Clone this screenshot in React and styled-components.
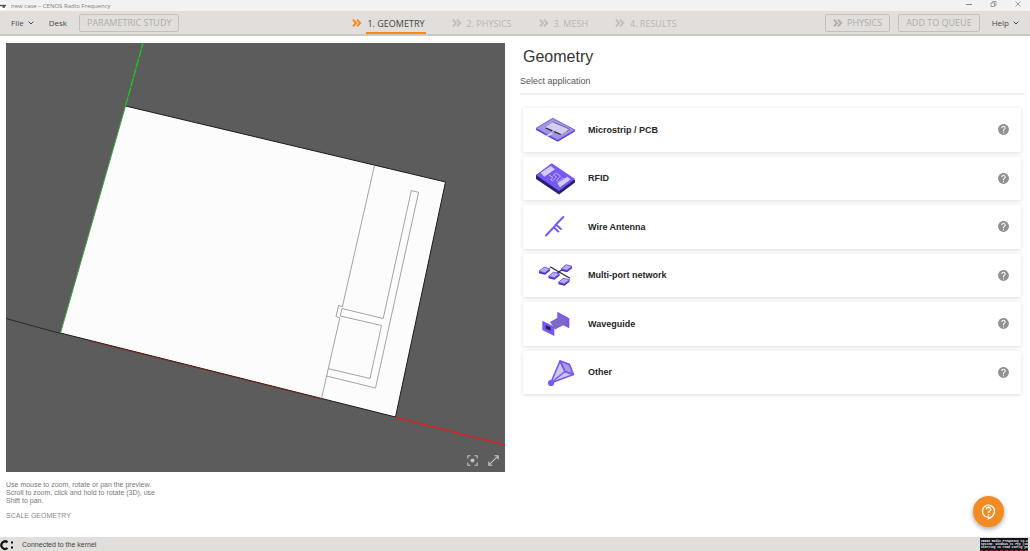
import React from "react";
import styled, { createGlobalStyle } from "styled-components";

const Global = createGlobalStyle`
  * { box-sizing: border-box; }
  body { margin: 0; background: #fff; font-family: "Liberation Sans", Arial, sans-serif; color: #333; }
  button { font: inherit; color: inherit; background: none; border: 0; padding: 0; margin: 0; cursor: pointer; }
  svg { display: block; flex: none; }
  h1, p { margin: 0; font-weight: 400; }
`;

const ui = `"Open Sans", "Noto Sans", sans-serif`;

const Page = styled.div`
  display: flex;
  flex-direction: column;
  min-height: 100vh;
`;

const TitleBar = styled.header`
  display: flex;
  align-items: center;
  gap: 5px;
  height: 11px;
  padding: 0 9px 0 0;
  background: #f2f2f2;
  font-family: ${ui};
  font-size: 6px;
  line-height: 10px;
  color: #808080;
`;

const WindowButtons = styled.div`
  display: flex;
  align-items: center;
  gap: 18px;
  height: 8px;
  margin-left: auto;
  align-self: flex-start;
  color: #8a8a8a;
`;

const Toolbar = styled.nav`
  display: grid;
  grid-template-columns: 1fr auto 1fr;
  align-items: center;
  height: 25px;
  padding: 0 11px;
  background: #e1dedb;
  border-bottom: 2px solid #cbc8c6;
  font-family: ${ui};
`;

const Group = styled.div`
  display: flex;
  align-items: center;
  justify-content: ${(p) => (p.$end ? "flex-end" : "flex-start")};
  gap: ${(p) => p.$gap}px;
`;

const MenuButton = styled.button`
  display: flex;
  align-items: center;
  gap: 4px;
  font-size: 8px;
  line-height: 16px;
  color: #4a4a4a;
`;

const OutlineButton = styled.button`
  display: flex;
  align-items: center;
  gap: 4px;
  height: 18px;
  padding: 0 7px;
  border: 1px solid #c3c1bf;
  border-radius: 2px;
  font-size: 9px;
  line-height: 16px;
  color: #b0aeac;
`;

const Steps = styled.div`
  display: flex;
  gap: 26px;
  align-self: end;
`;

const Step = styled.button`
  display: flex;
  align-items: center;
  gap: 4px;
  height: 23px;
  padding-top: 1px;
  font-size: 9px;
  color: ${(p) => (p.$active ? "#444" : "#b9b7b5")};
  svg { color: ${(p) => (p.$active ? "#f28a1c" : "#c0bebc")}; }
`;

const StepLabel = styled.span`
  height: 22px;
  line-height: 24px;
  padding: 0 1px;
  border-bottom: 2px solid ${(p) => (p.$active ? "#f28a1c" : "transparent")};
`;

const Main = styled.main`
  flex: 1;
  display: grid;
  grid-template-columns: minmax(0, 499fr) minmax(0, 505fr);
  align-items: start;
  gap: 15px;
  padding: 7px 5px 0 6px;
`;

const Viewport = styled.div`
  position: relative;
  background: #5c5c5c;
`;

const ViewTools = styled.div`
  position: absolute;
  right: 6px;
  bottom: 6px;
  display: flex;
  gap: 10px;
  color: #c4c4c4;
`;

const Hint = styled.p`
  width: 156px;
  margin-top: 9px;
  font-size: 7px;
  line-height: 8px;
  color: #777;
`;

const ScaleButton = styled.button`
  display: block;
  margin-top: 7px;
  font-size: 7px;
  line-height: 8px;
  color: #8a8a8a;
`;

const Heading = styled.h1`
  padding: 4px 3px 0;
  font-size: 16px;
  line-height: 20px;
  color: #333;
`;

const Subheading = styled.p`
  padding: 8px 0 6px;
  border-bottom: 2px solid #f0f0f0;
  font-size: 9px;
  line-height: 12px;
  color: #555;
`;

const Cards = styled.div`
  display: grid;
  grid-auto-rows: 1fr;
  gap: 5px;
  height: 286px;
  margin: 13px 4px 0 3px;
`;

const Card = styled.div`
  display: flex;
  align-items: center;
  padding-right: 11px;
  background: #fff;
  box-shadow: 0 1px 4px rgba(0, 0, 0, 0.14);
`;

const CardButton = styled.button`
  flex: 1;
  display: flex;
  align-items: center;
  gap: 11px;
  height: 100%;
  padding-left: 10px;
  font-size: 9px;
  font-weight: 700;
  color: #262626;
`;

const StatusBar = styled.footer`
  display: flex;
  align-items: center;
  gap: 8px;
  height: 14px;
  padding-right: 2px;
  background: #e1dedb;
  font-size: 7px;
  line-height: 14px;
  color: #444;
`;

const StatusText = styled.span`
  padding-top: 2px;
`;

const Console = styled.div`
  width: 48px;
  height: 13px;
  margin-left: auto;
  align-self: flex-end;
  padding: 2px 0 0 1px;
  background: #14141f;
  border-bottom: 1px dashed #b01c2c;
  color: #f4f4f4;
  font: 700 3px/3px "Liberation Mono", monospace;
  white-space: nowrap;
`;

const HelpFab = styled.button`
  position: fixed;
  right: 26px;
  bottom: 24px;
  display: grid;
  place-items: center;
  width: 31px;
  height: 31px;
  border-radius: 50%;
  background: #f28c22;
  color: #fff;
  box-shadow: 0 2px 5px rgba(0, 0, 0, 0.35);
`;

const Chevrons = () => (
  <svg width="10" height="8" viewBox="0 0 10 8" fill="none" stroke="currentColor" strokeWidth="1.9">
    <path d="M1 .6 4.1 4 1 7.4M5 .6 8.2 4 5 7.4" />
  </svg>
);

const Caret = () => (
  <svg width="6" height="4" viewBox="0 0 6 4" fill="none" stroke="currentColor">
    <path d="m.7.7 2.3 2.3L5.3.7" />
  </svg>
);

const Question = () => (
  <svg width="13" height="13" viewBox="0 0 24 24" fill="#929292">
    <path d="M12 2C6.48 2 2 6.48 2 12s4.48 10 10 10 10-4.48 10-10S17.52 2 12 2zm1 17h-2v-2h2v2zm2.07-7.75-.9.92C13.45 12.9 13 13.5 13 15h-2v-.5c0-1.1.45-2.1 1.17-2.83l1.24-1.26c.37-.36.59-.86.59-1.41 0-1.1-.9-2-2-2s-2 .9-2 2H8c0-2.21 1.79-4 4-4s4 1.79 4 4c0 .88-.36 1.68-.93 2.25z" />
  </svg>
);

const Scene = () => (
  <svg width="100%" viewBox="6 43 499 429" fill="none" role="img" aria-label="Geometry preview">
    <path d="M125.500 106 445.500 182 395.500 417 60.500 333z" fill="#fcfcfc" />
    <path d="M125.500 106 445.500 182 395.500 417 60.500 333" stroke="#1c1c1c" />
    <path d="M6 318.500 60.500 333.500" stroke="#202b36" />
    <path d="M60.500 333 125.500 106" stroke="#3aa63a" />
    <path d="M125.500 106 143 43" stroke="#22c022" strokeWidth="1.500" strokeDasharray="9 1" />
    <path d="M90 341 322 399" stroke="#8e2020" strokeWidth=".8" />
    <path d="M396 417.500 505 445" stroke="#d22424" strokeWidth="1.300" />
    <g stroke="#8c8c8c" strokeWidth=".8">
      <path d="M374.500 165.500 342.300 307M339.800 318 321.500 398.500" />
      <path d="M342.300 306.500 338.500 305.500 336 316.500 339.800 317.800" />
      <path d="M340.300 316 342 308.500 383.200 318.500 411.300 190.600 418.600 192.300 375.500 388 326.500 376" />
      <path d="M340.300 316 381.500 325.500 370 378.500 328.500 368.700" />
    </g>
  </svg>
);

const violet = "#7659f5";

const drawings = {
  pcb: (
    <g>
      <path d="m3 20.500 16.700-10.200L42 22v1.500L24.700 33.800 3 22z" fill="#5a3fd6" />
      <path d="m3 20.300 16.700-10L42 22 24.700 32z" fill="#a296dd" stroke={violet} strokeWidth=".8" />
      <path d="m12.700 19.300 7-5 16.600 7-7.600 5z" fill="#d2cef2" />
      <path d="m19.700 13.800 17 7.500-3 2.200" fill="none" stroke="#5d5580" strokeWidth=".7" />
      <path d="m12.700 20 6.500 2.800m2 .9 6.500 2.800" stroke="#2d2840" strokeWidth="1.300" />
      <path d="m18.300 24.500 2 1-5 2.800-2-1z" fill="#d8d5f5" />
    </g>
  ),
  rfid: (
    <g>
      <path d="m3 18 16-11 23 16v2.500L26 37.500 3 22z" fill="#2c2170" />
      <path d="M3 18 18.700 6.300 42 22 26 34z" fill={violet} />
      <path d="m7.700 15.700 10-6.700 4.300 3.300-10.700 7.400zM24.300 26.300l10-6.600 3.400 2.600L27 30.300z" fill="#d3cef1" />
      <path d="m16 18 4 2.500-2.500 2 2 1.500 4-4-3-2 2.500-2 4.500 3-4 4.500 2 1.500 4-4 2 1" stroke="#c2b8f5" strokeWidth=".9" fill="none" />
    </g>
  ),
  wire: (
    <path
      d="M13 30.500 20.700 22.300l4.600 4.200M30.300 12 23 19.500l4.800 4.500M20.700 22.300 23 20"
      stroke={violet}
      strokeWidth="2"
      fill="none"
      strokeLinecap="round"
    />
  ),
  network: (
    <g>
      <path d="m17 12.700 20 11.600M24 19l8-5" stroke="#292638" strokeWidth="1.200" />
      {[[6, 14.7], [28, 12.3], [15.5, 19.7], [25.5, 25.7]].map(([x, y]) => (
        <g key={x} transform={`translate(${x} ${y})`}>
          <path d="M0 2.500 5-1.500l6 1.500v2L6 6 0 4.500z" fill="#4a2fc4" />
          <path d="m0 2.500 5-4L11 0 6 4z" fill="#b9aeee" stroke={violet} strokeWidth=".9" />
        </g>
      ))}
    </g>
  ),
  waveguide: (
    <g>
      <path d="m24.300 9.700 12 6.600v10l-12-6z" fill={violet} />
      <path d="m17 20 10.500-6 6.200 2.500v5L22 27.500z" fill="#8069c4" />
      <path d="m9.300 18.700 12 6V34l-12-6z" fill={violet} />
      <path d="m12.800 23 4.700 2.200v3.600l-4.700-2.200z" fill="#292145" />
    </g>
  ),
  horn: (
    <g stroke={violet} strokeWidth="1.600" strokeLinejoin="round">
      <path d="m17.700 32 9.300-22 9.300 3.500 4 10z" fill="#cdc7eb" />
      <path d="m27 10 9.300 3.500 4 10L32 20.500z" fill="#a99ddc" />
      <path d="m27 10 5 10.500 8.300 3M32 20.500 17.700 32" fill="none" />
      <circle cx="18" cy="32" r="2.300" fill={violet} />
    </g>
  ),
};

const apps = [
  ["Microstrip / PCB", "pcb"],
  ["RFID", "rfid"],
  ["Wire Antenna", "wire"],
  ["Multi-port network", "network"],
  ["Waveguide", "waveguide"],
  ["Other", "horn"],
];

const steps = ["1. GEOMETRY", "2. PHYSICS", "3. MESH", "4. RESULTS"];

export default function App() {
  return (
    <Page>
      <Global />
      <TitleBar>
        <svg width="6" height="8" viewBox="0 0 6 8">
          <path fill="#fff" d="M0 0h6v8H0z" />
          <path d="M0 3.500h6M2.500 5H5" stroke="#555" strokeWidth="1.500" />
        </svg>
        <span>new case – CENOS Radio Frequency</span>
        <WindowButtons>
          <button aria-label="Minimize">
            <svg width="6" height="6" viewBox="0 0 6 6"><path d="M0 3.500h6" stroke="currentColor" /></svg>
          </button>
          <button aria-label="Restore">
            <svg width="7" height="6" viewBox="0 0 7 6" fill="none" stroke="currentColor" strokeWidth=".8">
              <path d="M1 1.800h3.500v3.700H1zM2.500 1.500v-1h3.500v3.800H5" />
            </svg>
          </button>
          <button aria-label="Close">
            <svg width="6" height="6" viewBox="0 0 6 6"><path d="m.5.5 5 5m0-5-5 5" stroke="currentColor" strokeWidth=".8" /></svg>
          </button>
        </WindowButtons>
      </TitleBar>
      <Toolbar>
        <Group $gap={15}>
          <MenuButton>File <Caret /></MenuButton>
          <Group $gap={12}>
            <MenuButton>Desk</MenuButton>
            <OutlineButton>PARAMETRIC STUDY</OutlineButton>
          </Group>
        </Group>
        <Steps>
          {steps.map((label, i) => (
            <Step key={label} $active={i === 0}>
              <Chevrons />
              <StepLabel $active={i === 0}>{label}</StepLabel>
            </Step>
          ))}
        </Steps>
        <Group $gap={12} $end>
          <Group $gap={8}>
            <OutlineButton><Chevrons /> PHYSICS</OutlineButton>
            <OutlineButton>ADD TO QUEUE</OutlineButton>
          </Group>
          <MenuButton>Help <Caret /></MenuButton>
        </Group>
      </Toolbar>
      <Main>
        <section>
          <Viewport>
            <Scene />
            <ViewTools>
              <button aria-label="Center view">
                <svg width="11" height="11" viewBox="0 0 11 11" fill="none" stroke="currentColor" strokeWidth="1.100">
                  <path d="M.8 3.500V.8h2.700M7.500.8h2.700v2.700M10.200 7.500v2.700H7.500M3.500 10.200H.8V7.500" />
                  <circle cx="5.500" cy="5.500" r="2" fill="currentColor" stroke="none" />
                </svg>
              </button>
              <button aria-label="Expand view">
                <svg width="11" height="11" viewBox="0 0 11 11" fill="none" stroke="currentColor" strokeWidth="1.100">
                  <path d="M6.500.8h3.700v3.700M.8 6.500v3.700h3.700M10.200.8.8 10.200" />
                </svg>
              </button>
            </ViewTools>
          </Viewport>
          <Hint>Use mouse to zoom, rotate or pan the preview. Scroll to zoom, click and hold to rotate (3D), use Shift to pan.</Hint>
          <ScaleButton>SCALE GEOMETRY</ScaleButton>
        </section>
        <section>
          <Heading>Geometry</Heading>
          <Subheading>Select application</Subheading>
          <Cards>
            {apps.map(([label, key]) => (
              <Card key={key}>
                <CardButton>
                  <svg width="44" height="43" viewBox="0 0 44 43">{drawings[key]}</svg>
                  {label}
                </CardButton>
                <button aria-label={`About ${label}`}><Question /></button>
              </Card>
            ))}
          </Cards>
        </section>
      </Main>
      <StatusBar>
        <svg width="14" height="14" viewBox="0 0 14 14">
          <path d="M7.500 5.300A3.700 3.700 0 1 0 7.500 11" fill="none" stroke="#111" strokeWidth="2.200" />
          <path d="M11 4.500h2v2h-2zM11 9.500h2v2h-2z" fill="#111" />
        </svg>
        <StatusText>Connected to the kernel</StatusText>
        <Console>
          <div>CENOS Radio Frequency v3.2</div>
          <div>System: Windows 11 Pro (10</div>
          <div>Starting to read config ya</div>
        </Console>
      </StatusBar>
      <HelpFab aria-label="Help">
        <svg width="17" height="17" viewBox="0 0 24 24" fill="currentColor">
          <path d="M11 23.600v-3.100C6 20.200 2.500 16.200 2.500 11.500 2.500 6.300 6.500 2 12 2s9.500 4.300 9.500 9.500c0 5-4 9.300-10.500 12.100zM12 4c-4.100 0-7.500 3.300-7.500 7.500S7.900 19 12 19h1v1.300c4-2.300 6.500-5.500 6.500-8.800C19.500 7.300 16.100 4 12 4zm-1 11.500h2v2h-2zm2-1.500h-2c0-3.250 3-3 3-5 0-1.100-.9-2-2-2s-2 .9-2 2H8c0-2.210 1.790-4 4-4s4 1.790 4 4c0 2.500-3 2.750-3 5z" />
        </svg>
      </HelpFab>
    </Page>
  );
}
